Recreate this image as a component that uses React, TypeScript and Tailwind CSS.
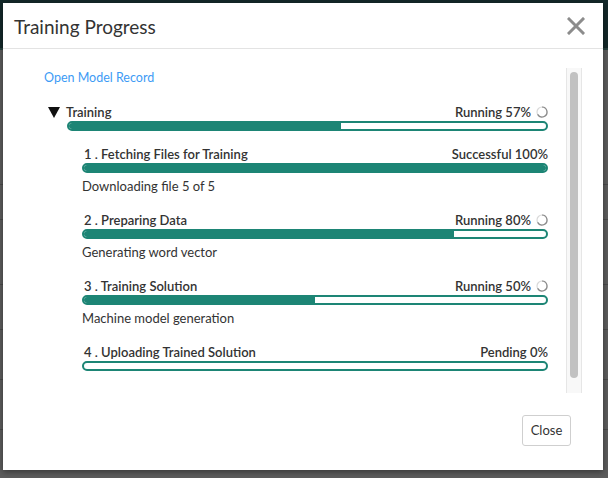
import React from 'react';

type Step = {
  title: string;
  status: string;
  pct: number;
  running?: boolean;
  note?: string;
};

const steps: Step[] = [
  { title: '1 . Fetching Files for Training', status: 'Successful 100%', pct: 100, note: 'Downloading file 5 of 5' },
  { title: '2 . Preparing Data', status: 'Running 80%', pct: 80, running: true, note: 'Generating word vector' },
  { title: '3 . Training Solution', status: 'Running 50%', pct: 50, running: true, note: 'Machine model generation' },
  { title: '4 . Uploading Trained Solution', status: 'Pending 0%', pct: 0 },
];

function Spinner() {
  return (
    <svg width="12" height="12" viewBox="0 0 12 12" className="ml-[5px] shrink-0">
      <circle cx="6" cy="6" r="5" fill="none" stroke="#d9d9d9" strokeWidth="1.2" />
      <path d="M6 1 A5 5 0 1 1 1.6 8.4" fill="none" stroke="#8a8a8a" strokeWidth="1.2" />
    </svg>
  );
}

function Bar({ pct }: { pct: number }) {
  return (
    <div className="mt-[1px] h-[10px] w-full overflow-hidden rounded-full border-2 border-[#1d8575] bg-white">
      <div className="h-full bg-[#1d8575]" style={{ width: `${pct}%` }} />
    </div>
  );
}

function StatusRow({ label, step }: { label: React.ReactNode; step: Step }) {
  return (
    <div className="flex h-4 items-center justify-between leading-4">
      {label}
      <div className="flex items-center font-semibold text-[#333]">
        <span>{step.status}</span>
        {step.running && <Spinner />}
      </div>
    </div>
  );
}

export default function App() {
  return (
    <div
      className="relative h-[478px] w-[608px] overflow-hidden bg-white text-[13px] text-[#333]"
      style={{ fontFamily: 'Lato, "Liberation Sans", sans-serif' }}
    >
      {/* page behind the dialog */}
      <div className="h-[50px] border-b-2 border-[#6fb3b0] bg-[#356f73]" />
      <div className="flex flex-col">
        <div className="h-[135px] border-b border-[#ccc]" />
        <div className="h-[35px] border-b border-[#ccc]" />
        <div className="h-[65px] border-b border-[#ccc]" />
        <div className="h-[45px] border-b border-[#ccc]" />
        <div className="h-[50px] border-b border-[#ccc]" />
        <div className="h-[50px] border-b border-[#ccc]" />
      </div>
      <div className="absolute inset-0 bg-black/[0.64]" />

      {/* dialog */}
      <div className="absolute left-[3px] top-[3px] flex h-[467px] w-[600px] flex-col bg-white shadow-[0_2px_6px_rgba(0,0,0,0.4)]">
        <div className="flex h-[46px] shrink-0 items-center justify-between border-b border-[#e3e3e3] pl-[11px] pr-[18px]">
          <h2 className="mt-[2px] text-[19px] leading-6 text-[#333]">Training Progress</h2>
          <svg width="18" height="18" viewBox="0 0 18 18" className="mt-[1px]">
            <path d="M2 2 L16 16 M16 2 L2 16" stroke="#8c8c8c" strokeWidth="3" strokeLinecap="square" />
          </svg>
        </div>

        <div className="flex pl-[27px] pr-[21px] pt-[19px]">
          <div className="h-[325px] flex-1 pl-[14px] pr-[18px] pt-[2px]">
            <a className="block h-4 leading-4 text-[12.5px] text-[#3d9bf5]">Open Model Record</a>

            <div className="mt-[18px]">
              <StatusRow
                step={{ title: 'Training', status: 'Running 57%', pct: 57, running: true }}
                label={
                  <div className="flex items-center">
                    <svg width="12" height="11" viewBox="0 0 12 11" className="ml-[4px] mr-[6px]">
                      <path d="M0 0 H12 L6 11 Z" fill="#111" />
                    </svg>
                    <span className="font-semibold">Training</span>
                  </div>
                }
              />
              <div className="pl-[23px]">
                <Bar pct={57} />
              </div>
            </div>

            <div className="pl-[38px]">
              {steps.map((s, i) => (
                <div key={s.title} className={i === 0 ? 'mt-[15px]' : 'mt-[18px]'}>
                  <StatusRow step={s} label={<span className="pl-[2px] font-semibold">{s.title}</span>} />
                  <Bar pct={s.pct} />
                  {s.note && <p className="mt-[5px] h-4 leading-4">{s.note}</p>}
                </div>
              ))}
            </div>
          </div>

          {/* scrollbar */}
          <div className="flex h-[325px] w-[16px] justify-center border-x border-[#e6e6e6] bg-[#f8f8f8] pt-[4px]">
            <div className="h-[306px] w-[8px] rounded-full bg-[#c1c1c1]" />
          </div>
        </div>

        <div className="flex justify-end pr-[32px] pt-[22px]">
          <button className="h-[31px] w-[49px] rounded-[3px] border border-[#cfcfcf] bg-white text-[13px] text-[#333]">
            Close
          </button>
        </div>
      </div>
    </div>
  );
}
